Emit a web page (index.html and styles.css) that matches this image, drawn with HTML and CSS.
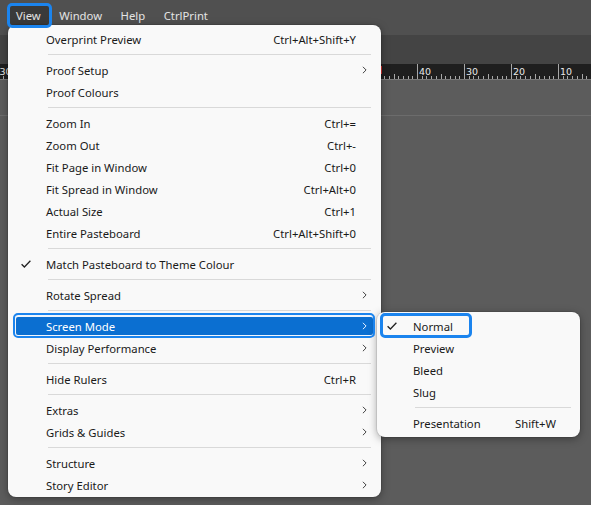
FILE: index.html
```html
<!DOCTYPE html>
<html lang="en">
<head>
<meta charset="utf-8">
<title>View menu</title>
<link rel="stylesheet" href="styles.css">
</head>
<body>
<div class="app">
  <header class="menubar">
    <span class="mb-item active">View</span>
    <span class="mb-item">Window</span>
    <span class="mb-item">Help</span>
    <span class="mb-item">CtrlPrint</span>
  </header>
  <div class="toolbar"></div>
  <div class="ruler">
    <svg width="591" height="16" viewBox="0 0 591 16" id="ruler-svg"></svg>
  </div>
  <div class="canvas"><div class="guide"></div></div>

  <div class="menu">
    <div class="row"><span class="chk"></span><span class="lbl">Overprint Preview</span><span class="sc">Ctrl+Alt+Shift+Y</span><span class="arr"></span></div>
    <div class="sep"></div>
    <div class="row"><span class="chk"></span><span class="lbl">Proof Setup</span><span class="sc"></span><span class="arr"><svg width="5" height="8" viewBox="0 0 5 8"><path d="M0.9 0.8 L4.1 4 L0.9 7.2"/></svg></span></div>
    <div class="row"><span class="chk"></span><span class="lbl">Proof Colours</span><span class="sc"></span><span class="arr"></span></div>
    <div class="sep"></div>
    <div class="row"><span class="chk"></span><span class="lbl">Zoom In</span><span class="sc">Ctrl+=</span><span class="arr"></span></div>
    <div class="row"><span class="chk"></span><span class="lbl">Zoom Out</span><span class="sc">Ctrl+-</span><span class="arr"></span></div>
    <div class="row"><span class="chk"></span><span class="lbl">Fit Page in Window</span><span class="sc">Ctrl+0</span><span class="arr"></span></div>
    <div class="row"><span class="chk"></span><span class="lbl">Fit Spread in Window</span><span class="sc">Ctrl+Alt+0</span><span class="arr"></span></div>
    <div class="row"><span class="chk"></span><span class="lbl">Actual Size</span><span class="sc">Ctrl+1</span><span class="arr"></span></div>
    <div class="row"><span class="chk"></span><span class="lbl">Entire Pasteboard</span><span class="sc">Ctrl+Alt+Shift+0</span><span class="arr"></span></div>
    <div class="sep"></div>
    <div class="row"><span class="chk"><svg width="10" height="8" viewBox="0 0 10 8"><path d="M0.6 4.2 L3.4 7 L9.4 0.8"/></svg></span><span class="lbl">Match Pasteboard to Theme Colour</span><span class="sc"></span><span class="arr"></span></div>
    <div class="sep"></div>
    <div class="row"><span class="chk"></span><span class="lbl">Rotate Spread</span><span class="sc"></span><span class="arr"><svg width="5" height="8" viewBox="0 0 5 8"><path d="M0.9 0.8 L4.1 4 L0.9 7.2"/></svg></span></div>
    <div class="sep"></div>
    <div class="row hl"><span class="chk"></span><span class="lbl">Screen Mode</span><span class="sc"></span><span class="arr"><svg width="5" height="8" viewBox="0 0 5 8"><path d="M0.9 0.8 L4.1 4 L0.9 7.2"/></svg></span></div>
    <div class="row"><span class="chk"></span><span class="lbl">Display Performance</span><span class="sc"></span><span class="arr"><svg width="5" height="8" viewBox="0 0 5 8"><path d="M0.9 0.8 L4.1 4 L0.9 7.2"/></svg></span></div>
    <div class="sep"></div>
    <div class="row"><span class="chk"></span><span class="lbl">Hide Rulers</span><span class="sc">Ctrl+R</span><span class="arr"></span></div>
    <div class="sep"></div>
    <div class="row"><span class="chk"></span><span class="lbl">Extras</span><span class="sc"></span><span class="arr"><svg width="5" height="8" viewBox="0 0 5 8"><path d="M0.9 0.8 L4.1 4 L0.9 7.2"/></svg></span></div>
    <div class="row"><span class="chk"></span><span class="lbl">Grids &amp; Guides</span><span class="sc"></span><span class="arr"><svg width="5" height="8" viewBox="0 0 5 8"><path d="M0.9 0.8 L4.1 4 L0.9 7.2"/></svg></span></div>
    <div class="sep"></div>
    <div class="row"><span class="chk"></span><span class="lbl">Structure</span><span class="sc"></span><span class="arr"><svg width="5" height="8" viewBox="0 0 5 8"><path d="M0.9 0.8 L4.1 4 L0.9 7.2"/></svg></span></div>
    <div class="row"><span class="chk"></span><span class="lbl">Story Editor</span><span class="sc"></span><span class="arr"><svg width="5" height="8" viewBox="0 0 5 8"><path d="M0.9 0.8 L4.1 4 L0.9 7.2"/></svg></span></div>
  </div>

  <div class="submenu">
    <div class="row"><span class="chk"><svg width="10" height="8" viewBox="0 0 10 8"><path d="M0.6 4.2 L3.4 7 L9.4 0.8"/></svg></span><span class="lbl">Normal</span><span class="sc"></span><span class="arr"></span></div>
    <div class="row"><span class="chk"></span><span class="lbl">Preview</span><span class="sc"></span><span class="arr"></span></div>
    <div class="row"><span class="chk"></span><span class="lbl">Bleed</span><span class="sc"></span><span class="arr"></span></div>
    <div class="row"><span class="chk"></span><span class="lbl">Slug</span><span class="sc"></span><span class="arr"></span></div>
    <div class="sep"></div>
    <div class="row"><span class="chk"></span><span class="lbl">Presentation</span><span class="sc">Shift+W</span><span class="arr"></span></div>
  </div>

  <div class="ring ring-view"></div>
  <div class="ring ring-screen"></div>
  <div class="ring ring-normal"></div>
</div>
<script src="ruler.js"></script>
</body>
</html>
```

FILE: ruler.js
```js
(function () {
  var svg = document.getElementById('ruler-svg');
  var out = '';
  var step = 47;
  var origin = 417; // x of the "40" mark
  for (var k = -10; k <= 4; k++) {
    var x0 = origin + k * step;
    var val = 40 - 10 * k;
    for (var i = 0; i < 10; i++) {
      var x = Math.round(x0 + i * step / 10) + 0.5;
      var h = i === 0 ? 15 : (i === 5 ? 5 : 3);
      out += '<line x1="' + x + '" y1="' + (15 - h) + '" x2="' + x + '" y2="15" />';
    }
    // only labels that are not hidden under the open menu
    if (val > 0 && x0 >= 381) {
      out += '<text x="' + (x0 + 2) + '" y="10.5">' + val + '</text>';
    }
  }
  out += '<text x="-0.5" y="10.5">30</text>';
  out += '<line class="base" x1="0" y1="15.5" x2="591" y2="15.5" />';
  out += '<line class="marker" x1="381.5" y1="2" x2="381.5" y2="10" />';
  svg.innerHTML = out;
})();
```

FILE: styles.css
```css
* { box-sizing: border-box; }
html, body { margin: 0; padding: 0; }
body {
  width: 591px;
  height: 505px;
  overflow: hidden;
  background: #5c5c5c;
  font-family: "Noto Sans", "Open Sans", sans-serif;
  font-size: 11.3px;
}
.app {
  position: relative;
  width: 591px;
  height: 505px;
  display: flex;
  flex-direction: column;
}
.menubar {
  height: 35px;
  background: #505050;
  display: flex;
  align-items: flex-start;
  padding: 6px 0 0 7px;
}
.mb-item {
  height: 19px;
  line-height: 19px;
  padding: 0 9.5px 0 9px;
  color: #e4e4e4;
}
.mb-item.active { background: #3a3a3a; }
.toolbar {
  height: 29px;
  background: #444444;
}
.ruler {
  height: 16px;
  background: #1f1f1f;
}
.ruler svg { display: block; }
.ruler line { stroke: #a8a8a8; stroke-width: 1; }
.ruler line.base { stroke: #7a7a7a; }
.ruler line.marker { stroke: #e0322f; }
.ruler text {
  fill: #e8e8e8;
  font-family: "DejaVu Sans", sans-serif;
  font-size: 9.5px;
}
.canvas {
  flex: 1;
  background: #5c5c5c;
  padding-top: 35px;
}
.guide {
  height: 1px;
  background: #6c6c6c;
}

.menu, .submenu {
  position: absolute;
  background: #f9f9f9;
  border-radius: 8px;
  box-shadow: 0 2px 8px rgba(0, 0, 0, 0.35), 0 0 0 1px rgba(0, 0, 0, 0.08);
  color: #1a1a1a;
}
.menu {
  left: 8px;
  top: 25px;
  width: 373px;
  padding: 3px 0 1px;
}
.submenu {
  left: 377px;
  top: 312px;
  width: 203px;
  padding: 3px 0;
}
.row {
  height: 22px;
  margin: 0 6px;
  display: flex;
  align-items: center;
  border-radius: 4px;
}
.submenu .row { margin: 0 4px; }
.chk {
  width: 32px;
  flex: none;
  display: flex;
  align-items: center;
  padding-left: 7px;
}
.submenu .chk { padding-left: 6px; }
.chk svg path {
  fill: none;
  stroke: #222;
  stroke-width: 1.3;
}
.lbl { flex: 1; white-space: nowrap; }
.sc { white-space: nowrap; }
.arr {
  width: 19px;
  flex: none;
  display: flex;
  align-items: center;
  padding-left: 6px;
}
.submenu .arr { width: 20px; }
.arr svg path {
  fill: none;
  stroke: #444;
  stroke-width: 1;
}
.row.hl {
  background: #0b6fd1;
  color: #ffffff;
  box-shadow: inset 0 0 0 2px #f0f6fd;
}
.row.hl .arr svg path { stroke: #e8f2ff; }
.sep {
  height: 9px;
  padding: 4px 10px 4px 40px;
}
.sep::after {
  content: "";
  display: block;
  height: 1px;
  background: #d9d9d9;
}
.submenu .sep { padding: 4px 9px 4px 38px; }

.ring {
  position: absolute;
  border: 3px solid #1b84ee;
  border-radius: 5px;
}
.ring-view { left: 7px; top: 3px; width: 45px; height: 25px; }
.ring-screen { left: 13px; top: 313px; width: 362px; height: 25px; border-width: 2.5px; }
.ring-normal { left: 380px; top: 313px; width: 92px; height: 25px; }
```
